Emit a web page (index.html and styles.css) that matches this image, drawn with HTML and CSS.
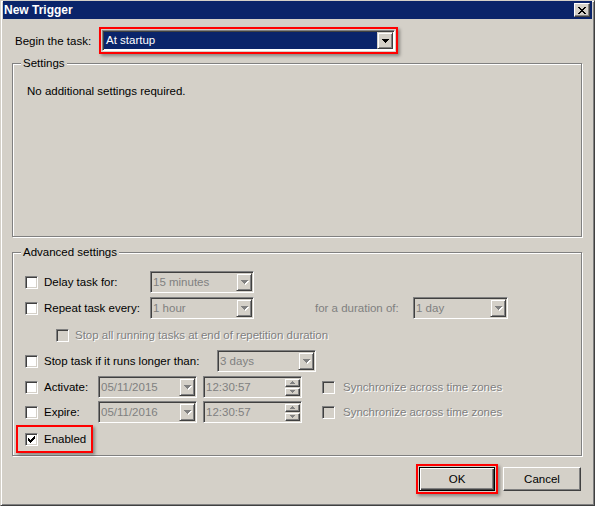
FILE: index.html
```html
<!DOCTYPE html>
<html>
<head>
<meta charset="utf-8">
<title>New Trigger</title>
<link rel="stylesheet" href="styles.css">
</head>
<body>
<div class="window">
  <div class="titlebar">
    <span class="title">New Trigger</span>
    <span class="close">
      <svg width="8" height="7" viewBox="0 0 8 7" shape-rendering="crispEdges"><path fill="#000" d="M0 0h2v1H0zM6 0h2v1H6zM1 1h2v1H1zM5 1h2v1H5zM2 2h4v1H2zM3 3h2v1H3zM2 4h4v1H2zM1 5h2v1H1zM5 5h2v1H5zM0 6h2v1H0zM6 6h2v1H6z"/></svg>
    </span>
  </div>
  <div class="content">
    <div class="begin-row">
      <span class="begin-label">Begin the task:</span>
      <div class="hl hl-combo">
        <div class="combo combo-main">
          <span class="ctext sel">At startup</span>
          <span class="dbtn"><svg width="7" height="4" viewBox="0 0 7 4" shape-rendering="crispEdges"><path fill="#000" d="M0 0h7v1H0zM1 1h5v1H1zM2 2h3v1H2zM3 3h1v1H3z"/></svg></span>
        </div>
      </div>
    </div>

    <fieldset class="group group-settings">
      <legend>Settings</legend>
      <div class="settings-body">
        <p class="note">No additional settings required.</p>
      </div>
    </fieldset>

    <fieldset class="group group-adv">
      <legend>Advanced settings</legend>
      <div class="adv-body">
        <div class="row row-first">
          <span class="cbcell w-main"><span class="chk"></span><span class="lbl">Delay task for:</span></span>
          <div class="combo w104"><span class="ctext">15 minutes</span><span class="dbtn"><svg class="darr" width="8" height="5" viewBox="0 0 8 5" shape-rendering="crispEdges"><path fill="#fff" d="M1 1h7v1H1zM2 2h5v1H2zM3 3h3v1H3zM4 4h1v1H4z"/><path fill="#808080" d="M0 0h7v1H0zM1 1h5v1H1zM2 2h3v1H2zM3 3h1v1H3z"/></svg></span></div>
        </div>
        <div class="row row-gap4">
          <span class="cbcell w-main"><span class="chk"></span><span class="lbl">Repeat task every:</span></span>
          <div class="combo w104"><span class="ctext">1 hour</span><span class="dbtn"><svg class="darr" width="8" height="5" viewBox="0 0 8 5" shape-rendering="crispEdges"><path fill="#fff" d="M1 1h7v1H1zM2 2h5v1H2zM3 3h3v1H3zM4 4h1v1H4z"/><path fill="#808080" d="M0 0h7v1H0zM1 1h5v1H1zM2 2h3v1H2zM3 3h1v1H3z"/></svg></span></div>
          <span class="dur-label">for a duration of:</span>
          <div class="combo w95"><span class="ctext">1 day</span><span class="dbtn"><svg class="darr" width="8" height="5" viewBox="0 0 8 5" shape-rendering="crispEdges"><path fill="#fff" d="M1 1h7v1H1zM2 2h5v1H2zM3 3h3v1H3zM4 4h1v1H4z"/><path fill="#808080" d="M0 0h7v1H0zM1 1h5v1H1zM2 2h3v1H2zM3 3h1v1H3z"/></svg></span></div>
        </div>
        <div class="row row-gap5 row-indent">
          <span class="chk dis"></span><span class="lbl dis-text">Stop all running tasks at end of repetition duration</span>
        </div>
        <div class="row row-gap4">
          <span class="cbcell w-stop"><span class="chk"></span><span class="lbl">Stop task if it runs longer than:</span></span>
          <div class="combo w99"><span class="ctext">3 days</span><span class="dbtn"><svg class="darr" width="8" height="5" viewBox="0 0 8 5" shape-rendering="crispEdges"><path fill="#fff" d="M1 1h7v1H1zM2 2h5v1H2zM3 3h3v1H3zM4 4h1v1H4z"/><path fill="#808080" d="M0 0h7v1H0zM1 1h5v1H1zM2 2h3v1H2zM3 3h1v1H3z"/></svg></span></div>
        </div>
        <div class="row row-gap4">
          <span class="cbcell w-date"><span class="chk"></span><span class="lbl">Activate:</span></span>
          <div class="combo w99"><span class="ctext">05/11/2015</span><span class="dbtn"><svg class="darr" width="8" height="5" viewBox="0 0 8 5" shape-rendering="crispEdges"><path fill="#fff" d="M1 1h7v1H1zM2 2h5v1H2zM3 3h3v1H3zM4 4h1v1H4z"/><path fill="#808080" d="M0 0h7v1H0zM1 1h5v1H1zM2 2h3v1H2zM3 3h1v1H3z"/></svg></span></div>
          <div class="combo w99 timefield"><span class="ctext">12:30:57</span><span class="spin"><span class="sbtn"><svg width="5" height="3" viewBox="0 0 5 3" shape-rendering="crispEdges"><path fill="#808080" d="M2 0h1v1H2zM1 1h3v1H1zM0 2h5v1H0z"/></svg></span><span class="sbtn"><svg width="5" height="3" viewBox="0 0 5 3" shape-rendering="crispEdges"><path fill="#808080" d="M0 0h5v1H0zM1 1h3v1H1zM2 2h1v1H2z"/></svg></span></span></div>
          <span class="chk dis sync-chk"></span><span class="lbl dis-text">Synchronize across time zones</span>
        </div>
        <div class="row row-gap3">
          <span class="cbcell w-date"><span class="chk"></span><span class="lbl">Expire:</span></span>
          <div class="combo w99"><span class="ctext">05/11/2016</span><span class="dbtn"><svg class="darr" width="8" height="5" viewBox="0 0 8 5" shape-rendering="crispEdges"><path fill="#fff" d="M1 1h7v1H1zM2 2h5v1H2zM3 3h3v1H3zM4 4h1v1H4z"/><path fill="#808080" d="M0 0h7v1H0zM1 1h5v1H1zM2 2h3v1H2zM3 3h1v1H3z"/></svg></span></div>
          <div class="combo w99 timefield"><span class="ctext">12:30:57</span><span class="spin"><span class="sbtn"><svg width="5" height="3" viewBox="0 0 5 3" shape-rendering="crispEdges"><path fill="#808080" d="M2 0h1v1H2zM1 1h3v1H1zM0 2h5v1H0z"/></svg></span><span class="sbtn"><svg width="5" height="3" viewBox="0 0 5 3" shape-rendering="crispEdges"><path fill="#808080" d="M0 0h5v1H0zM1 1h3v1H1zM2 2h1v1H2z"/></svg></span></span></div>
          <span class="chk dis sync-chk"></span><span class="lbl dis-text">Synchronize across time zones</span>
        </div>
        <div class="row-enabled">
          <div class="hl hl-enabled">
            <span class="chk"><svg class="check" width="7" height="7" viewBox="0 0 7 7" shape-rendering="crispEdges"><path fill="#000" d="M6 0h1v1H6zM5 1h2v1H5zM0 2h1v1H0zM4 2h3v1H4zM0 3h2v1H0zM3 3h3v1H3zM0 4h5v1H0zM1 5h3v1H1zM2 6h1v1H2z"/></svg></span>
            <span class="lbl">Enabled</span>
          </div>
        </div>
      </div>
    </fieldset>

    <div class="buttons">
      <div class="hl hl-ok"><span class="btn btn-default">OK</span></div>
      <span class="btn btn-cancel">Cancel</span>
    </div>
  </div>
</div>
</body>
</html>
```

FILE: styles.css
```css
* { box-sizing: border-box; }
html, body { margin: 0; padding: 0; }
body {
  width: 595px;
  height: 506px;
  overflow: hidden;
  background: #D4D0C8;
  font-family: "Liberation Sans", Arial, sans-serif;
  font-size: 11.5px;
  color: #000;
}
.window {
  width: 595px;
  height: 506px;
  display: flex;
  flex-direction: column;
  background: #D4D0C8;
  border: 1px solid;
  border-color: #D4D0C8 #404040 #404040 #D4D0C8;
  box-shadow: inset 1px 1px 0 #fff, inset -1px -1px 0 #808080;
  padding: 0 2px 2px 2px;
}
.titlebar {
  height: 18px;
  flex: none;
  background: #0A246A;
  display: flex;
  align-items: center;
  padding-left: 1px;
}
.title {
  flex: 1;
  color: #fff;
  font-weight: bold;
  font-size: 12px;
  line-height: 18px;
}
.close {
  width: 16px;
  height: 14px;
  margin-right: 2px;
  display: flex;
  align-items: center;
  justify-content: center;
  background: #D4D0C8;
  border: 1px solid;
  border-color: #fff #404040 #404040 #fff;
  box-shadow: inset -1px -1px 0 #808080;
}
.content {
  flex: 1;
  padding: 0 10px 0 9px;
  display: flex;
  flex-direction: column;
}
.begin-row {
  display: flex;
  align-items: center;
  margin-top: 8px;
}
.begin-label {
  width: 84px;
  margin-left: 3px;
  flex: none;
}
.hl {
  border: 2px solid #f00;
  padding: 1px;
  box-shadow: 2px 2px 3px rgba(0, 0, 0, 0.35);
}
.hl-combo { width: 299px; }

/* combos */
.combo {
  display: flex;
  height: 22px;
  border: 1px solid;
  border-color: #808080 #fff #fff #808080;
  box-shadow: inset 1px 1px 0 #404040, inset -1px -1px 0 #D4D0C8;
  padding: 1px;
  background: #D4D0C8;
  flex: none;
}
.ctext {
  flex: 1;
  color: #808080;
  line-height: 18px;
  padding-left: 1px;
  white-space: nowrap;
  overflow: hidden;
}
.dbtn {
  width: 16px;
  height: 18px;
  flex: none;
  display: flex;
  align-items: center;
  justify-content: center;
  padding-left: 1px;
  padding-top: 1px;
  border: 1px solid;
  border-color: #D4D0C8 #404040 #404040 #D4D0C8;
  box-shadow: inset 1px 1px 0 #fff, inset -1px -1px 0 #808080;
  background: #D4D0C8;
}
.combo-main {
  height: 21px;
  background: #fff;
  box-shadow: inset 1px 1px 0 #404040, inset -1px -1px 0 #fff;
}
.combo-main .ctext.sel {
  background: #0A246A;
  color: #fff;
  line-height: 17px;
  padding-left: 2px;
}
.combo-main .dbtn { height: 17px; padding: 0; }

.w104 { width: 104px; }
.w99 { width: 99px; }
.w95 { width: 95px; }

.timefield { margin-left: 6px; }
.spin {
  width: 15px;
  display: flex;
  flex-direction: column;
  justify-content: center;
  gap: 1px;
}
.sbtn {
  height: 8px;
  display: flex;
  align-items: center;
  justify-content: center;
  border: 1px solid;
  border-color: #fff #404040 #404040 #fff;
  box-shadow: inset -1px -1px 0 #808080;
}

/* group boxes */
.group {
  margin: 0;
  padding: 0;
  border: 1px solid #808080;
  box-shadow: 1px 1px 0 #fff, inset 1px 1px 0 #fff;
  min-width: 0;
}
.group legend {
  margin-left: 8px;
  padding: 0 2px;
  line-height: 15px;
  background: #D4D0C8;
}
.group-settings { margin-top: 2px; }
.settings-body { height: 165px; padding: 13px 0 0 14px; }
.note { margin: 0; line-height: 15px; }

.group-adv { margin-top: 8px; }
.adv-body {
  height: 195px;
  padding: 11px 0 0 12px;
  display: flex;
  flex-direction: column;
}
.row {
  display: flex;
  align-items: center;
  height: 22px;
  flex: none;
}
.row-gap4 { margin-top: 4px; }
.row-gap5 { margin-top: 5px; }
.row-gap3 { margin-top: 3px; }
.row-indent { padding-left: 31px; }
.cbcell {
  display: flex;
  align-items: center;
  flex: none;
}
.w-main { width: 125px; }
.w-stop { width: 192px; }
.w-date { width: 73px; }
.chk {
  width: 13px;
  height: 13px;
  flex: none;
  position: relative;
  border: 1px solid;
  border-color: #808080 #fff #fff #808080;
  box-shadow: inset 1px 1px 0 #404040, inset -1px -1px 0 #D4D0C8;
  background: #fff;
  display: flex;
  align-items: center;
  justify-content: center;
}
.chk.dis { background: #D4D0C8; }
.lbl {
  margin-left: 6px;
  white-space: nowrap;
  line-height: 15px;
}
.dis-text {
  color: #808080;
  text-shadow: 1px 1px 0 #fff;
}
.dur-label {
  width: 98px;
  margin-left: 61px;
  color: #808080;
  white-space: nowrap;
}
.sync-chk { margin-left: 20px; }
.sync-chk + .lbl { margin-left: 8px; }

.row-enabled {
  margin-top: 2px;
  display: flex;
  margin-left: -9px;
}
.hl-enabled {
  width: 77px;
  height: 28px;
  display: flex;
  align-items: center;
  padding-left: 7px;
}

/* buttons */
.buttons {
  display: flex;
  justify-content: flex-end;
  align-items: center;
  margin-top: 8px;
  margin-right: 1px;
}
.btn {
  display: flex;
  align-items: center;
  justify-content: center;
  height: 24px;
  background: #D4D0C8;
}
.btn-default {
  width: 76px;
  border: 1px solid #000;
  box-shadow: inset 1px 1px 0 #fff, inset -1px -1px 0 #404040, inset -2px -2px 0 #808080;
}
.btn-cancel {
  width: 78px;
  margin-left: 5px;
  border: 1px solid;
  border-color: #fff #404040 #404040 #fff;
  box-shadow: inset -1px -1px 0 #808080;
}
```
